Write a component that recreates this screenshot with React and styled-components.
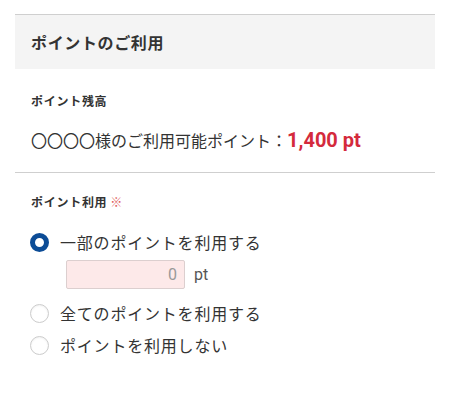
import React, { useState } from "react";
import styled, { createGlobalStyle } from "styled-components";

const Global = createGlobalStyle`
  html, body { margin: 0; padding: 0; background: #fff; }
  body { font-family: "Noto Sans CJK JP", "Noto Sans", sans-serif; color: #333; }
`;

const Panel = styled.div`
  margin: 14px 15px 0;
  width: 420px;
`;

const Header = styled.div`
  border-top: 1px solid #cfcfcf;
  background: #f4f4f4;
  height: 54px;
  display: flex;
  align-items: center;
  padding-left: 16px;
`;

const Title = styled.h2`
  margin: 0;
  font-size: 16px;
  font-weight: 700;
  letter-spacing: 0.04em;
  color: #333;
`;

const Section = styled.div`
  padding: ${(p) => p.$pad};
  border-bottom: ${(p) => (p.$divider ? "1px solid #cfcfcf" : "none")};
`;

const Label = styled.div`
  font-size: 12px;
  line-height: 18px;
  font-weight: 700;
  letter-spacing: 0.06em;
  color: #333;
`;

const Required = styled.span`
  color: #e05a5a;
  margin-left: 3px;
  font-weight: 400;
`;

const Balance = styled.div`
  margin-top: 18px;
  font-size: 16px;
  line-height: 24px;
  color: #333;
  display: flex;
  align-items: baseline;
`;

const Amount = styled.span`
  font-family: Roboto, "Noto Sans", sans-serif;
  font-weight: 700;
  font-size: 20px;
  color: #d42a3c;
`;

const Options = styled.div`
  margin-top: 19px;
  display: flex;
  flex-direction: column;
`;

const Option = styled.label`
  display: flex;
  align-items: center;
  height: 24px;
  margin-top: ${(p) => p.$mt || 0}px;
  margin-left: -1px;
  font-size: 16px;
  letter-spacing: 0.05em;
  color: #333;
  cursor: pointer;
`;

const Radio = styled.span`
  box-sizing: border-box;
  width: 19px;
  height: 19px;
  border-radius: 50%;
  margin-right: 11px;
  flex: none;
  background: #fff;
  border: ${(p) => (p.$checked ? "5px solid #0c4c96" : "1px solid #cccccc")};
  box-shadow: ${(p) => (p.$checked ? "none" : "inset 0 1px 2px rgba(0,0,0,0.06)")};
`;

const AmountRow = styled.div`
  display: flex;
  align-items: center;
  margin: 6px 0 0 35px;
`;

const PointInput = styled.input`
  box-sizing: border-box;
  width: 119px;
  height: 29px;
  border: 1px solid #dccfcf;
  border-radius: 2px;
  background: #fde9e9;
  text-align: right;
  padding: 0 7px;
  font-family: Roboto, "Noto Sans", sans-serif;
  font-size: 16px;
  color: #999;
  outline: none;
`;

const Unit = styled.span`
  margin-left: 9px;
  font-family: Roboto, "Noto Sans", sans-serif;
  font-size: 16px;
  color: #555;
`;

export default function App() {
  const [choice, setChoice] = useState(0);
  const options = ["一部のポイントを利用する", "全てのポイントを利用する", "ポイントを利用しない"];
  return (
    <>
      <Global />
      <Panel>
        <Header>
          <Title>ポイントのご利用</Title>
        </Header>
        <Section $pad="23px 16px 20px" $divider>
          <Label>ポイント残高</Label>
          <Balance>
            〇〇〇〇様のご利用可能ポイント：<Amount>1,400 pt</Amount>
          </Balance>
        </Section>
        <Section $pad="20px 16px 0">
          <Label>
            ポイント利用<Required>※</Required>
          </Label>
          <Options>
            <Option onClick={() => setChoice(0)}>
              <Radio $checked={choice === 0} />
              {options[0]}
            </Option>
            <AmountRow>
              <PointInput defaultValue="0" />
              <Unit>pt</Unit>
            </AmountRow>
            <Option $mt={12} onClick={() => setChoice(1)}>
              <Radio $checked={choice === 1} />
              {options[1]}
            </Option>
            <Option $mt={8} onClick={() => setChoice(2)}>
              <Radio $checked={choice === 2} />
              {options[2]}
            </Option>
          </Options>
        </Section>
      </Panel>
    </>
  );
}
